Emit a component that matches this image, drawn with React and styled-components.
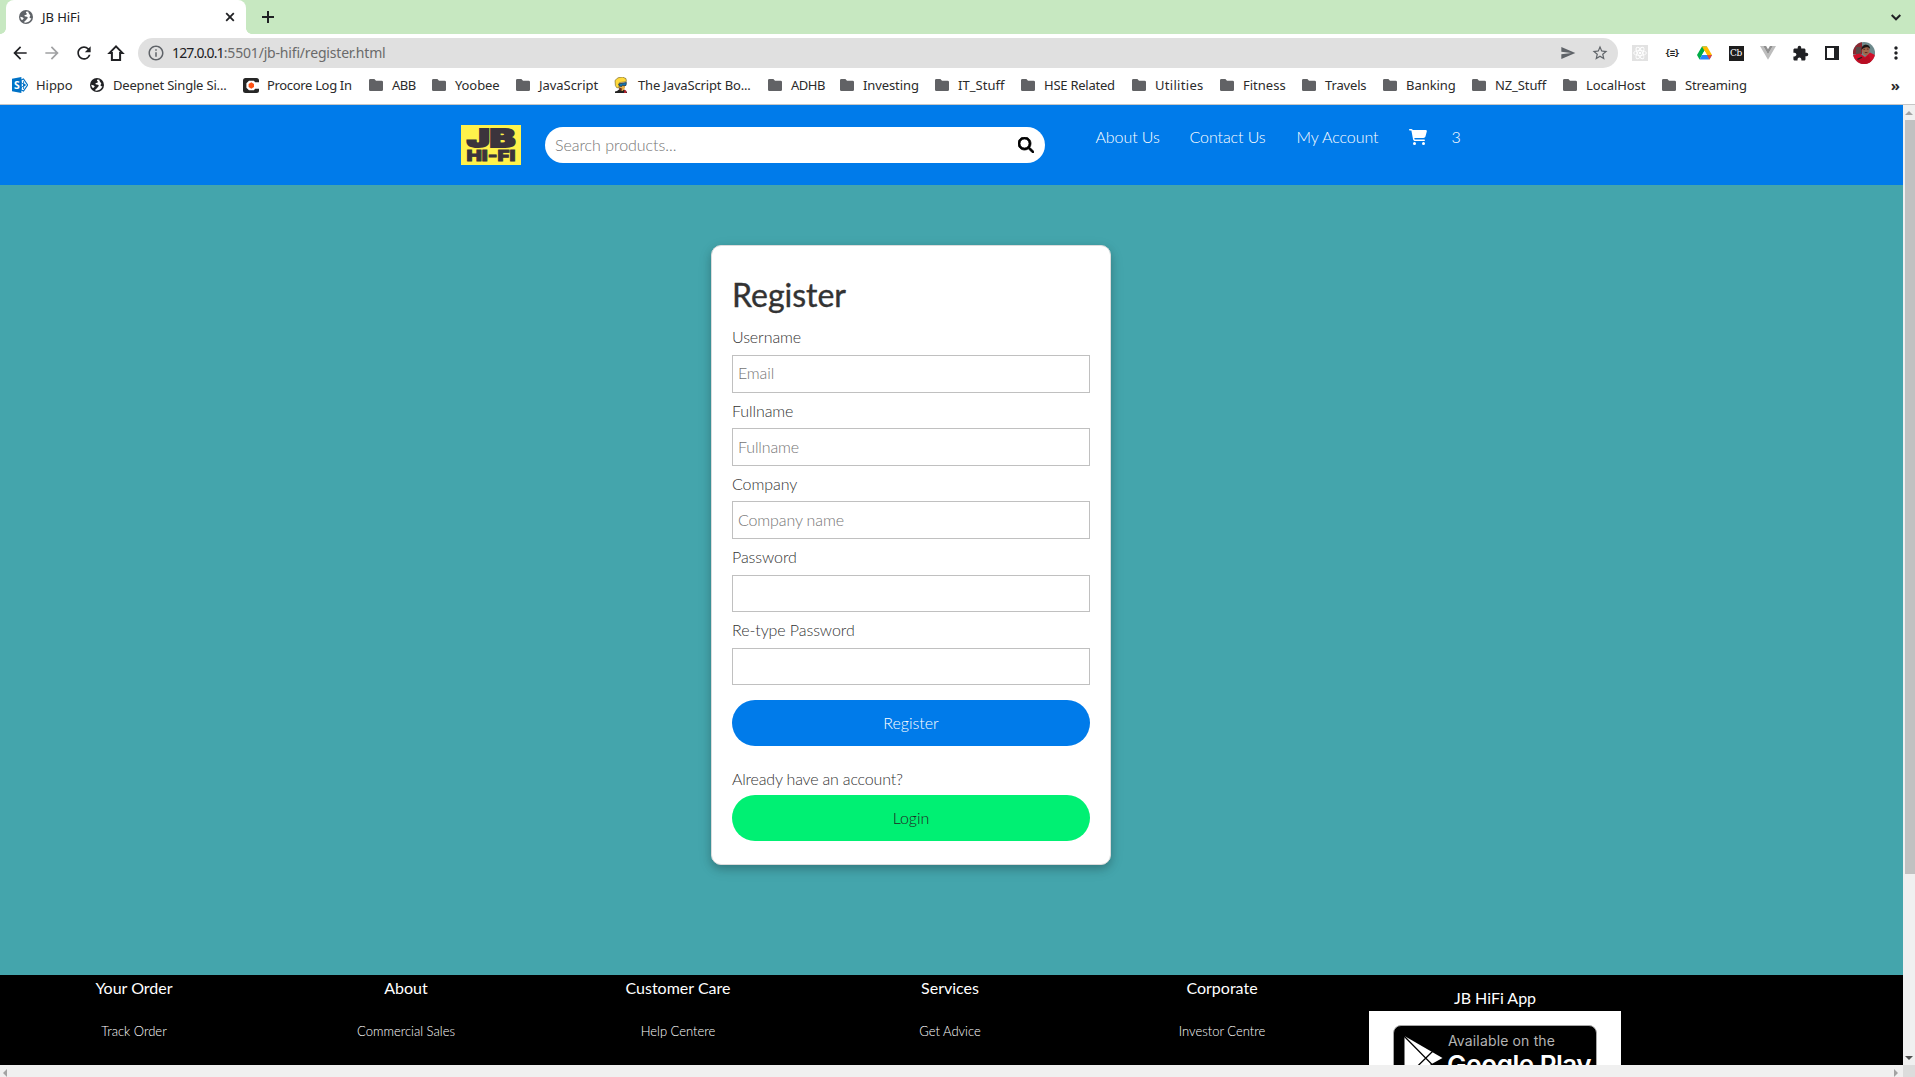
import React from "react";
import styled, { createGlobalStyle } from "styled-components";
import { FaMagnifyingGlass, FaCartShopping } from "react-icons/fa6";
import {
  MdArrowBack, MdArrowForward, MdRefresh, MdInfoOutline, MdSend,
  MdStarBorder, MdExtension, MdMoreVert,
} from "react-icons/md";

const GlobalStyle = createGlobalStyle`
  *, *::before, *::after { box-sizing: border-box; }
  body { margin: 0; background: #fff; overflow: hidden; }
`;

const Window = styled.div`
  display: flex;
  flex-direction: column;
  width: 1915px;
  height: 1077px;
  overflow: hidden;
  font-family: "Noto Sans", sans-serif;
  color: #2b2b2b;
`;

/* ---------- browser chrome ---------- */

const TabStrip = styled.div`
  display: flex;
  align-items: flex-end;
  height: 34px;
  flex: none;
  background: #c7e8c1;
  color: #202124;
`;

const TabFlare = styled.div`
  width: 6px;
  height: 6px;
  background: radial-gradient(circle at ${(p) => (p.$right ? "100%" : "0")} 0, transparent 5.6px, #fff 6.2px);
`;

const Tab = styled.div`
  display: flex;
  align-items: center;
  width: 240px;
  height: 34px;
  padding: 0 11px 0 13px;
  border-radius: 8px 8px 0 0;
  background: #fff;
  font-size: 13px;
`;

const TabTitle = styled.span`
  flex: 1;
  margin-left: 9px;
  letter-spacing: -0.05px;
`;

const StripButton = styled.div`
  display: flex;
  align-items: center;
  height: 34px;
  margin-left: ${(p) => p.$left};
  margin-right: ${(p) => p.$right || 0};
`;

const Stroke = styled.svg`
  display: block;
  flex: none;
  fill: none;
  stroke: #202124;
  stroke-width: ${(p) => p.$width || 2};
`;

const Toolbar = styled.div`
  display: flex;
  align-items: center;
  height: 38px;
  flex: none;
  color: #202124;
`;

const NavButtons = styled.div`
  display: flex;
  align-items: center;
  width: 138px;
  padding-left: 10px;
  gap: 12px;
`;

const Omnibox = styled.div`
  display: flex;
  align-items: center;
  width: 1480px;
  height: 30px;
  padding: 0 9px 0 9px;
  border-radius: 15px;
  background: #e0e0e0;
  color: #5f6368;
`;

const Url = styled.div`
  display: flex;
  flex: 1;
  margin-left: 7px;
  font-size: 14px;
  line-height: 20px;
  letter-spacing: -0.18px;
  color: #6a6a6a;
`;

const Host = styled.span`
  color: #202124;
  letter-spacing: -0.84px;
`;

const OmniIcons = styled.div`
  display: flex;
  align-items: center;
  gap: 15px;
`;

const Extensions = styled.div`
  display: flex;
  align-items: center;
  padding-left: 6px;
`;

const Extension = styled.span`
  display: flex;
  align-items: center;
  justify-content: center;
  width: 32px;
  svg { display: block; }
`;

const Braces = styled.span`
  font: bold 9px/16px "DejaVu Sans Mono", monospace;
  letter-spacing: -0.7px;
  color: #222;
`;

const CodeBadge = styled.span`
  display: flex;
  align-items: center;
  justify-content: center;
  width: 15px;
  height: 15px;
  background: #1d1d1d;
  color: #fff;
  font: 9px/14px "DejaVu Serif", serif;
  letter-spacing: -0.4px;
`;

const BookmarkBar = styled.div`
  display: flex;
  align-items: center;
  height: 33px;
  flex: none;
  padding: 0 15px 6px 12px;
  border-bottom: 1px solid #c6c6c6;
  font-size: 13px;
`;

const Bookmark = styled.div`
  display: flex;
  align-items: center;
  width: ${(p) => p.$width}px;
  flex: none;
  white-space: nowrap;
  letter-spacing: ${(p) => p.$track}px;
`;

const BookmarkIcon = styled.span`
  display: flex;
  width: ${(p) => p.$width}px;
  flex: none;
`;

const Overflow = styled.span`
  margin-left: auto;
  font-size: 15px;
  font-weight: 700;
  line-height: 20px;
  padding-bottom: 1px;
`;

/* ---------- viewport ---------- */

const Viewport = styled.div`
  display: grid;
  grid-template-columns: 1903px 12px;
  grid-template-rows: 960px 12px;
  font-family: Lato, sans-serif;
`;

const Page = styled.div`
  display: flex;
  flex-direction: column;
  overflow: hidden;
  background: #44a5ac;
`;

const VTrack = styled.div`
  display: flex;
  flex-direction: column;
  justify-content: space-between;
  align-items: center;
  padding: 6px 0 5px;
  background: #f0f0f0;
`;

const Thumb = styled.div`
  width: 10px;
  height: 754px;
  margin: 5px 0 auto 2px;
  background: #c1c1c1;
`;

const HTrack = styled.div`
  display: flex;
  justify-content: space-between;
  align-items: center;
  padding: 3px 5px 0 3px;
  background: #f0f0f0;
`;

const Corner = styled.div`
  background: #dcdcdc;
`;

const Arrow = styled.svg`
  display: block;
  flex: none;
  fill: ${(p) => p.$fill || "#a3a3a3"};
`;

/* ---------- site header ---------- */

const Header = styled.header`
  display: flex;
  height: 80px;
  flex: none;
  padding-left: 461px;
  padding-top: 20px;
  background: #007bea;
`;

const Logo = styled.svg`
  display: block;
  width: 60px;
  height: 40px;
  background: #fff24b;
`;

const SearchBox = styled.div`
  display: flex;
  align-items: center;
  width: 500px;
  height: 36px;
  margin: 2px 0 0 24px;
  padding: 0 11px 0 10px;
  border-radius: 18px;
  background: #fff;
  color: #000;
`;

const SearchInput = styled.input`
  flex: 1;
  border: 0;
  padding: 0;
  background: none;
  outline: 0;
  font: 300 16px/20px Lato, sans-serif;
  letter-spacing: -0.04px;
  &::placeholder { color: #757575; opacity: 1; }
`;

const Nav = styled.nav`
  display: flex;
  height: 24px;
  margin-left: 50.5px;
  font-size: 16px;
  font-weight: 300;
  line-height: 24px;
  color: #fff;
`;

const NavItem = styled.a`
  width: ${(p) => p.$width}px;
  white-space: nowrap;
  letter-spacing: -0.08px;
  svg { display: block; margin-top: 3px; }
`;

/* ---------- register card ---------- */

const Main = styled.main`
  display: flex;
  justify-content: center;
  align-items: flex-start;
  height: 790px;
  flex: none;
  padding: 60px 81px 0 0;
`;

const Card = styled.form`
  display: flex;
  flex-direction: column;
  width: 400px;
  height: 620px;
  padding: 29px 20px 0;
  border: 1px solid #dcdcdc;
  border-radius: 10px;
  background: #fff;
  box-shadow: 0 4px 8px 0 rgba(0, 0, 0, 0.2), 0 4px 16px 0 rgba(0, 0, 0, 0.08);
  color: #333;
  font-size: 16px;
  font-weight: 300;
`;

const Title = styled.h1`
  margin: 0 0 10.4px;
  font-size: 32px;
  font-weight: 400;
  line-height: 40px;
  -webkit-text-stroke: 0.4px #333;
`;

const Field = styled.label`
  display: flex;
  flex-direction: column;
  height: 73.2px;
  line-height: 24px;
  letter-spacing: -0.08px;
`;

const Input = styled.input`
  width: 358px;
  height: ${(p) => p.$height}px;
  margin-top: 5.6px;
  padding: 0 5px 2px;
  border: 1px solid #c0c0c0;
  background: #fff;
  font: 300 16px/20px Lato, sans-serif;
  letter-spacing: -0.13px;
  outline: 0;
  &::placeholder { color: #757575; opacity: 1; }
`;

const Pill = styled.button`
  height: 46px;
  width: 358px;
  flex: none;
  border: 0;
  padding: 0;
  margin-top: ${(p) => p.$top || 0}px;
  border-radius: 23px;
  background: ${(p) => p.$bg};
  color: ${(p) => p.$color};
  font: 300 16px/20px Lato, sans-serif;
`;

const Prompt = styled.p`
  margin: 21px 0 4px;
  line-height: 24px;
  letter-spacing: -0.19px;
`;

/* ---------- footer ---------- */

const Footer = styled.footer`
  display: flex;
  gap: 4px;
  height: 90px;
  flex: none;
  overflow: hidden;
  background: #000;
  color: #fff;
  text-align: center;
`;

const Column = styled.div`
  display: flex;
  flex-direction: column;
  align-items: center;
  width: 268px;
  padding-top: ${(p) => p.$top}px;
  padding-left: ${(p) => p.$left || 0}px;
`;

const ColumnTitle = styled.h4`
  margin: 0;
  font-size: 16px;
  font-weight: 400;
  line-height: 24px;
  margin-bottom: ${(p) => p.$gap || 0}px;
`;

const ColumnLink = styled.a`
  font-size: 13px;
  font-weight: 300;
  line-height: 20px;
  color: #fff;
`;

const AppPanel = styled.div`
  width: 252px;
  height: 84px;
  flex: none;
  display: flex;
  justify-content: center;
  padding-top: 14px;
  background: #fff;
`;

const PlayBadge = styled.div`
  display: flex;
  width: 204px;
  height: 62px;
  padding: 10px 0 0 10px;
  border: 1px solid #a6a6a6;
  border-radius: 8px;
  background: #000;
  text-align: left;
  font-family: Inter, sans-serif;
`;

const BadgeText = styled.div`
  display: flex;
  flex-direction: column;
  flex: none;
  white-space: nowrap;
  margin-left: 4px;
`;

const BadgeSmall = styled.span`
  margin: -2px 0 0 1px;
  font-size: 14px;
  line-height: 14px;
  letter-spacing: 0.15px;
  color: #b4b4b4;
`;

const BadgeLarge = styled.span`
  margin-top: 2px;
  font-size: 26px;
  font-weight: 600;
  line-height: 30px;
  letter-spacing: -0.5px;
`;

/* ---------- icon drawings ---------- */

const Folder = () => (
  <svg width="14" height="12" viewBox="0 0 14 12">
    <path d="M1.4 0H5.4L7 1.7H12.6Q14 1.7 14 3V10.7Q14 12 12.6 12H1.4Q0 12 0 10.7V1.3Q0 0 1.4 0Z" fill="#616265" />
  </svg>
);

const Globe = ({ fill }) => (
  <svg width="14" height="14" viewBox="0 0 14 14">
    <circle cx="7" cy="7" r="7" fill={fill} />
    <path d="M7.6 1.6C6.6 2.2 6.7 3.3 7.9 3.6C8.4 4.6 7 5.1 6.2 5C5 5.2 5.3 6.3 6.4 6.5C8.6 6.4 9 7.4 8.6 8.3C7.6 8.7 7.6 10 6.6 10.6C5.6 11.2 5 12 5.2 12.6C8 13.2 11.6 11.4 12.4 8.3C11.2 8.4 10.4 7.9 10.6 6.7C11.6 6.2 11.4 5 10.6 4.5C10 3.4 9 2.6 9.5 1.8Z" fill="#fff" />
    <path d="M1.3 6.7C2.6 6.9 3.8 7.2 4.4 8.1C5.2 8.9 4 9.6 3.2 10.1C2.1 9.6 1.4 8.3 1.3 6.7Z" fill="#fff" />
  </svg>
);

const Hippo = () => (
  <svg width="16" height="16" viewBox="0 0 16 16">
    <path d="M9 3L11.5 2L15.6 8L11.5 14L9 13Z" fill="#fff" stroke="#0072c6" strokeWidth="1.1" />
    <path d="M9 5.5L12.5 8L9 10.8M11.6 4.2V12" fill="none" stroke="#0072c6" strokeWidth=".9" />
    <circle cx="12.4" cy="8" r="1.3" fill="#0072c6" />
    <path d="M0 1.8L9.4 0V16L0 14.2Z" fill="#0072c6" />
    <text x="2" y="12" fill="#fff" fontFamily="Noto Sans" fontWeight="700" fontSize="10.5">S</text>
  </svg>
);

const Procore = () => (
  <svg width="16" height="15" viewBox="0 0 16 15">
    <rect width="16" height="15" rx="2.5" fill="#262626" />
    <path d="M16 4.2H12.2L10.8 2.8H6L3.4 5.2V9.8L6 12.2H10.8L12.2 10.8H16Z" fill="#fff" />
    <path d="M8.3 4.3L11 5.9V9.1L8.3 10.7L5.6 9.1V5.9Z" fill="#ff5215" />
  </svg>
);

const Hero = () => (
  <svg width="15" height="16" viewBox="0 0 15 16">
    <path d="M3 14L5 12.5H10L13 15V16H1V14.6Z" fill="#222" />
    <path d="M4 6H11V11L8.6 14L5.4 12.4Z" fill="#e8b04a" />
    <path d="M1.4 8.5L1 3.4L4 .8L8.4 0L12 1.6L12.4 4.4L10 5L5.4 5.6L4.8 11L2.6 10.6Z" fill="#ffd93b" stroke="#695b1f" strokeWidth=".6" />
    <path d="M4.6 7L12.4 5.4L12 8.4L9.6 8.8L8.8 7.8L7.8 9.4L5.6 9.2Z" fill="#1479b8" stroke="#1d2b3a" strokeWidth=".7" />
    <path d="M5.4 10.6L8.4 11.8L7 13.4L5 12.8Z" fill="#6b3320" />
    <path d="M10.6 12.6L12.4 14V16H10Z" fill="#b81f2d" />
  </svg>
);

const ReactTile = () => (
  <svg width="16" height="16" viewBox="0 0 16 16">
    <rect width="16" height="16" fill="#e2e2e2" />
    <g fill="none" stroke="#fff" strokeWidth=".9">
      <ellipse cx="8" cy="8" rx="6.4" ry="2.5" />
      <ellipse cx="8" cy="8" rx="6.4" ry="2.5" transform="rotate(60 8 8)" />
      <ellipse cx="8" cy="8" rx="6.4" ry="2.5" transform="rotate(120 8 8)" />
    </g>
    <circle cx="8" cy="8" r="1.3" fill="#fff" />
  </svg>
);

const Drive = () => (
  <svg width="15" height="14" viewBox="0 0 16 14">
    <path d="M5.3 0H10.7L8 4.7L2.7 13.8L0 9.2Z" fill="#00ac47" />
    <path d="M5.3 0H10.7L16 9.2H10.6Z" fill="#ffba00" />
    <path d="M5.3 9.2H16L13.3 13.8H2.7Z" fill="#2684fc" />
    <path d="M10.6 9.2H16L13.3 13.8Z" fill="#ea4335" />
    <path d="M8 4.7L10.6 9.2H5.3Z" fill="#fff" />
  </svg>
);

const Vue = () => (
  <svg width="16" height="14" viewBox="0 0 16 14">
    <path d="M0 0H3.2L8 8.2L12.8 0H16L8 13.8Z" fill="#bdbdbd" />
    <path d="M3.2 0H6.1L8 3.2L9.9 0H12.8L8 8.2Z" fill="#8f8f8f" />
  </svg>
);

const SidePanel = () => (
  <svg width="14" height="14" viewBox="0 0 14 14">
    <path d="M0 0H14V14H0ZM2 2V12H9V2Z" fill="#202124" fillRule="evenodd" />
  </svg>
);

const Avatar = () => (
  <svg width="22" height="22" viewBox="0 0 22 22">
    <clipPath id="face"><circle cx="11" cy="11" r="11" /></clipPath>
    <g clipPath="url(#face)">
      <rect width="22" height="22" fill="#6d8a8c" />
      <path d="M0 0H9V12H0Z" fill="#8c2730" />
      <path d="M3 5H8V13H3Z" fill="#5a4a48" />
      <path d="M0 13L7 11.5L12 15L17 10.5L22 13V22H0Z" fill="#d0102a" />
      <path d="M4 18L9 14.5L12 16L16 13L18 20L14 22H8Z" fill="#b80d22" />
      <ellipse cx="12.8" cy="8" rx="3.8" ry="5.4" fill="#a3684c" />
      <path d="M8.6 8C7.6 1.6 17.2 .6 17.2 7C15.4 4.4 11 4.4 8.6 8Z" fill="#1b1716" />
      <path d="M10.4 7.3H12.2M13.8 7.1H15.6M11.8 10.6H14.4" stroke="#3b201a" strokeWidth=".8" />
      <path d="M4.4 17.4L9 15.2" stroke="#222" strokeWidth="1.2" />
    </g>
  </svg>
);

const PlayMark = () => (
  <svg width="39" height="44" viewBox="0 0 39 44">
    <path d="M.5 0L38.5 22L.5 43Z" fill="#fff" />
    <path d="M0 0L29.5 30M0 43.5L30 14" stroke="#000" strokeWidth="1.3" />
  </svg>
);

const folder = { icon: Folder, iconWidth: 23 };
const bookmarks = [
  { label: "Hippo", icon: Hippo, iconWidth: 24, width: 78, track: -0.05 },
  { label: "Deepnet Single Si...", icon: () => <Globe fill="#202124" />, iconWidth: 23, width: 153, track: -0.18 },
  { label: "Procore Log In", icon: Procore, iconWidth: 24, width: 126, track: -0.33 },
  { label: "ABB", ...folder, width: 63, track: -0.5 },
  { label: "Yoobee", ...folder, width: 84, track: -0.1 },
  { label: "JavaScript", ...folder, width: 98, track: -0.05 },
  { label: "The JavaScript Bo...", icon: Hero, iconWidth: 24, width: 154, track: -0.15 },
  { label: "ADHB", ...folder, width: 72, track: -0.5 },
  { label: "Investing", ...folder, width: 95, track: -0.1 },
  { label: "IT_Stuff", ...folder, width: 86, track: 0.05 },
  { label: "HSE Related", ...folder, width: 111, track: -0.25 },
  { label: "Utilities", ...folder, width: 88, track: 0.3 },
  { label: "Fitness", ...folder, width: 82, track: 0 },
  { label: "Travels", ...folder, width: 81, track: -0.15 },
  { label: "Banking", ...folder, width: 89, track: -0.05 },
  { label: "NZ_Stuff", ...folder, width: 91, track: -0.1 },
  { label: "LocalHost", ...folder, width: 99, track: -0.08 },
  { label: "Streaming", ...folder, width: 90, track: -0.15 },
];

const extensions = [
  <ReactTile />,
  <Braces>{"{≡}"}</Braces>,
  <Drive />,
  <CodeBadge>Cb</CodeBadge>,
  <Vue />,
  <MdExtension size={17} />,
  <SidePanel />,
  <Avatar />,
  <MdMoreVert size={20} />,
];

const fields = [
  { label: "Username", placeholder: "Email", height: 38 },
  { label: "Fullname", placeholder: "Fullname", height: 38 },
  { label: "Company", placeholder: "Company name", height: 38 },
  { label: "Password", placeholder: "", height: 37 },
  { label: "Re-type Password", placeholder: "", height: 37 },
];

const columns = [
  ["Your Order", "Track Order"],
  ["About", "Commercial Sales"],
  ["Customer Care", "Help Centere"],
  ["Services", "Get Advice"],
  ["Corporate", "Investor Centre"],
];

export default function App() {
  return (
    <Window>
      <GlobalStyle />
      <TabStrip>
        <TabFlare />
        <Tab>
          <Globe fill="#5f6368" />
          <TabTitle>JB HiFi</TabTitle>
          <Stroke width="10" height="10" viewBox="0 0 10 10" $width={1.8}><path d="M1.2 1.2L8.8 8.8M8.8 1.2L1.2 8.8" /></Stroke>
        </Tab>
        <TabFlare $right />
        <StripButton $left="10px"><Stroke width="12" height="12" viewBox="0 0 12 12"><path d="M6 0V12M0 6H12" /></Stroke></StripButton>
        <StripButton $left="auto" $right="14px"><Stroke width="10" height="7" viewBox="0 0 10 7"><path d="M.7 1L5 5.3L9.3 1" /></Stroke></StripButton>
      </TabStrip>

      <Toolbar>
        <NavButtons>
          <MdArrowBack size={20} />
          <MdArrowForward size={20} color="#a0a1a3" />
          <MdRefresh size={20} />
          <Stroke width="20" height="20" viewBox="0 0 20 20"><path d="M10 3.4L3.6 9.9H5.9V17H14.1V9.9H16.4Z" /></Stroke>
        </NavButtons>
        <Omnibox>
          <MdInfoOutline size={18} />
          <Url><Host>127.0.0.1</Host>:5501/jb-hifi/register.html</Url>
          <OmniIcons>
            <MdSend size={16} />
            <MdStarBorder size={18} />
          </OmniIcons>
        </Omnibox>
        <Extensions>
          {extensions.map((icon, i) => <Extension key={i}>{icon}</Extension>)}
        </Extensions>
      </Toolbar>

      <BookmarkBar>
        {bookmarks.map(({ label, icon: Icon, iconWidth, width, track }) => (
          <Bookmark key={label} $width={width} $track={track}>
            <BookmarkIcon $width={iconWidth}><Icon /></BookmarkIcon>
            {label}
          </Bookmark>
        ))}
        <Overflow>»</Overflow>
      </BookmarkBar>

      <Viewport>
        <Page>
          <Header>
            <Logo viewBox="0 0 60 40">
              <g fill="#3b343c" stroke="#3b343c" fontFamily="Inter, sans-serif" fontWeight="900">
                <text strokeWidth="1.4" transform="translate(6 22.4) scale(1 1.25)" fontSize="19" textLength="48" lengthAdjust="spacingAndGlyphs">JB</text>
                <text strokeWidth="0.6" transform="translate(5.5 36) scale(1 1.25)" fontSize="12" textLength="49" lengthAdjust="spacingAndGlyphs">HI-FI</text>
              </g>
            </Logo>
            <SearchBox>
              <SearchInput placeholder="Search products..." />
              <FaMagnifyingGlass size={16} strokeWidth={26} />
            </SearchBox>
            <Nav>
              <NavItem $width={94}>About Us</NavItem>
              <NavItem $width={107}>Contact Us</NavItem>
              <NavItem $width={112}>My Account</NavItem>
              <NavItem $width={43}><FaCartShopping size={18} /></NavItem>
              <NavItem $width={10}>3</NavItem>
            </Nav>
          </Header>

          <Main>
            <Card>
              <Title>Register</Title>
              {fields.map((f) => (
                <Field key={f.label}>
                  {f.label}
                  <Input placeholder={f.placeholder} $height={f.height} />
                </Field>
              ))}
              <Pill type="button" $top={8.6} $bg="#007bea" $color="#fff">Register</Pill>
              <Prompt>Already have an account?</Prompt>
              <Pill type="button" $bg="#00f073" $color="#222">Login</Pill>
            </Card>
          </Main>

          <Footer>
            {columns.map(([title, link]) => (
              <Column key={title} $top={1}>
                <ColumnTitle $gap={21}>{title}</ColumnTitle>
                <ColumnLink>{link}</ColumnLink>
              </Column>
            ))}
            <Column $top={11} $left={2}>
              <ColumnTitle $gap={1}>JB HiFi App</ColumnTitle>
              <AppPanel>
                <PlayBadge>
                  <PlayMark />
                  <BadgeText>
                    <BadgeSmall>Available on the</BadgeSmall>
                    <BadgeLarge>Google Play</BadgeLarge>
                  </BadgeText>
                </PlayBadge>
              </AppPanel>
            </Column>
          </Footer>
        </Page>
        <VTrack>
          <Arrow width="8" height="4" viewBox="0 0 8 4"><path d="M0 4L4 0L8 4Z" /></Arrow>
          <Thumb />
          <Arrow $fill="#505050" width="8" height="4" viewBox="0 0 8 4"><path d="M0 0H8L4 4Z" /></Arrow>
        </VTrack>
        <HTrack>
          <Arrow width="4" height="8" viewBox="0 0 4 8"><path d="M4 0V8L0 4Z" /></Arrow>
          <Arrow width="4" height="8" viewBox="0 0 4 8"><path d="M0 0V8L4 4Z" /></Arrow>
        </HTrack>
        <Corner />
      </Viewport>
    </Window>
  );
}
